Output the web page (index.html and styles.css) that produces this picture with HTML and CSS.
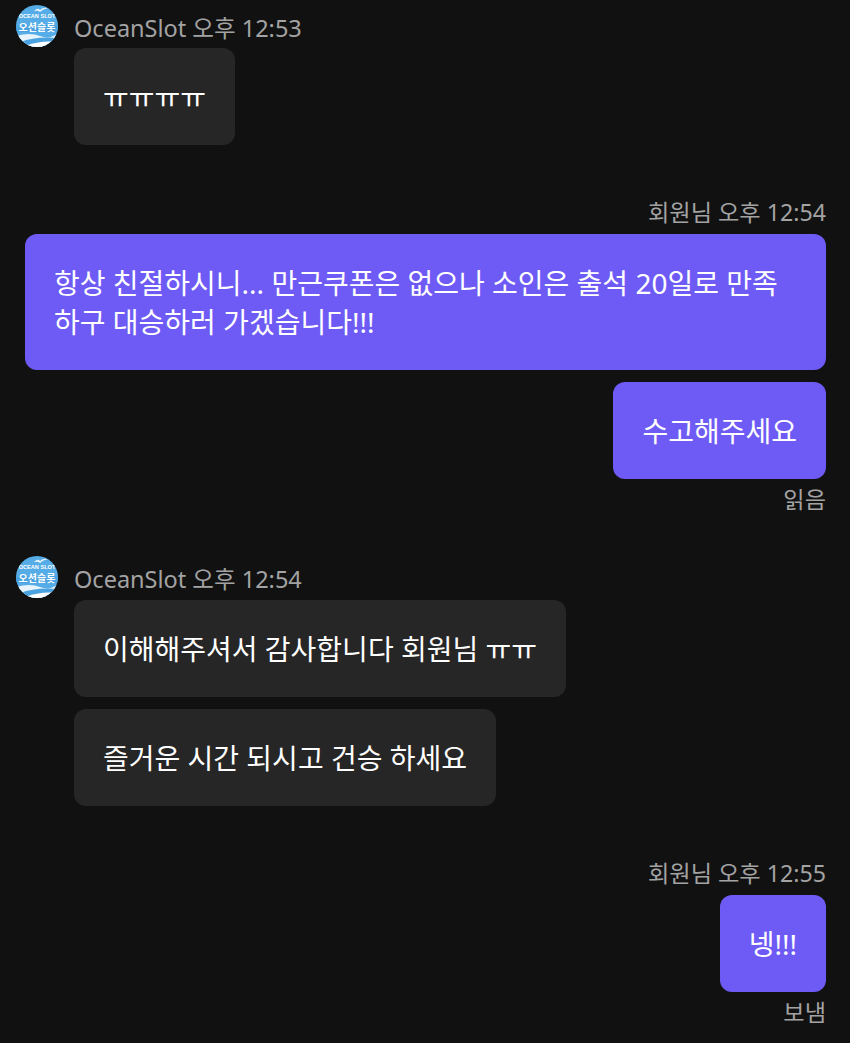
FILE: index.html
```html
<!DOCTYPE html>
<html lang="ko">
<head>
    <meta charset="UTF-8">
    <meta name="viewport" content="width=device-width, initial-scale=1.0">
    <title>OceanSlot</title>
    <link rel="stylesheet" href="styles.css">
</head>
<body>
    <div class="chat">
        <section class="group first">
            <div class="sender">
                <svg class="avatar" viewBox="0 0 42 42">
                    <rect width="42" height="42" fill="#55ace6"/>
                    <path d="M0 27 H42 V20 H0 Z" fill="#4aa3e0"/>
                    <path d="M0 31 Q14 27 24 31 T42 28 V42 H0 Z" fill="#e8f4fb"/>
                    <path d="M4 37 Q20 31 42 33 V42 H4 Z" fill="#4aa3e0"/>
                    <path d="M12 40 Q26 35 42 37 V42 H12 Z" fill="#fff"/>
                    <path d="M18 6 Q22 2 24 5 Q27 2 32 3 Q27 4 24 7 Q22 5 18 6 Z" fill="#e6f2fa"/>
                    <text x="21" y="13" class="logo-en">OCEAN SLOT</text>
                    <text x="21" y="26" class="logo-ko">오션슬롯</text>
                </svg>
                <span class="meta">OceanSlot 오후 12:53</span>
            </div>
            <div class="bubble them">ㅠㅠㅠㅠ</div>
        </section>

        <section class="group mine">
            <div class="meta">회원님 오후 12:54</div>
            <div class="bubble me">항상 친절하시니... 만근쿠폰은 없으나 소인은 출석 20일로 만족하구 대승하러 가겠습니다!!!</div>
            <div class="bubble me">수고해주세요</div>
            <div class="meta status">읽음</div>
        </section>

        <section class="group near">
            <div class="sender">
                <svg class="avatar" viewBox="0 0 42 42">
                    <rect width="42" height="42" fill="#55ace6"/>
                    <path d="M0 27 H42 V20 H0 Z" fill="#4aa3e0"/>
                    <path d="M0 31 Q14 27 24 31 T42 28 V42 H0 Z" fill="#e8f4fb"/>
                    <path d="M4 37 Q20 31 42 33 V42 H4 Z" fill="#4aa3e0"/>
                    <path d="M12 40 Q26 35 42 37 V42 H12 Z" fill="#fff"/>
                    <path d="M18 6 Q22 2 24 5 Q27 2 32 3 Q27 4 24 7 Q22 5 18 6 Z" fill="#e6f2fa"/>
                    <text x="21" y="13" class="logo-en">OCEAN SLOT</text>
                    <text x="21" y="26" class="logo-ko">오션슬롯</text>
                </svg>
                <span class="meta">OceanSlot 오후 12:54</span>
            </div>
            <div class="bubble them">이해해주셔서 감사합니다 회원님 ㅠㅠ</div>
            <div class="bubble them">즐거운 시간 되시고 건승 하세요</div>
        </section>

        <section class="group mine">
            <div class="meta">회원님 오후 12:55</div>
            <div class="bubble me">넹!!!</div>
            <div class="meta status">보냄</div>
        </section>
    </div>
</body>
</html>
```

FILE: styles.css
```css
* {
    margin: 0;
    padding: 0;
    box-sizing: border-box;
}

body {
    background-color: #111112;
    color: #fff;
    font-family: 'Noto Sans', 'Noto Sans CJK KR', sans-serif;
}

.chat {
    padding: 5px 24px 0 16px;
}

.group {
    display: flex;
    flex-direction: column;
    align-items: flex-start;
    gap: 12px;
    margin-top: 51px;
}

.group.first {
    margin-top: 0;
}

.group.near {
    margin-top: 41px;
}

.group.mine {
    align-items: flex-end;
}

.meta {
    font-size: 23.5px;
    line-height: 32px;
    color: #a3a3a3;
}

.mine > .meta {
    margin-bottom: -6px;
    font-size: 23.2px;
}

.mine > .status {
    margin-top: -8px;
    margin-bottom: 0;
}

.sender {
    display: flex;
    align-items: flex-start;
    gap: 16px;
    height: 43px;
    margin-bottom: -12px;
}

.near .sender {
    height: 44px;
}

.sender .meta {
    margin-top: 7px;
}

.avatar {
    width: 42px;
    height: 42px;
    border-radius: 50%;
    flex-shrink: 0;
}

.logo-en {
    font-family: 'Liberation Sans', sans-serif;
    font-size: 5.6px;
    font-weight: 700;
    fill: #fff;
    text-anchor: middle;
}

.logo-ko {
    font-family: 'Noto Sans CJK KR', sans-serif;
    font-size: 10px;
    font-weight: 700;
    fill: #fff;
    text-anchor: middle;
}

.bubble {
    max-width: 801px;
    padding: 30px 29px 28px;
    border-radius: 12px;
    font-size: 28px;
    line-height: 39px;
    word-break: break-all;
}

.them {
    margin-left: 58px;
    background-color: #262626;
}

.me {
    background-color: #6e5bf5;
}
```
